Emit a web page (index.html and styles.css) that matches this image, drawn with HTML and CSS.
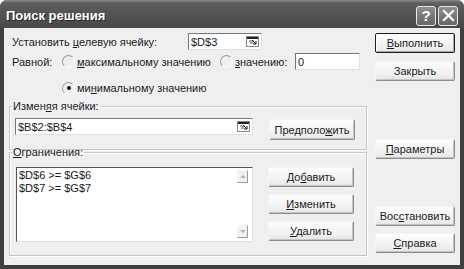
FILE: index.html
```html
<!DOCTYPE html>
<html lang="ru">
<head>
    <meta charset="UTF-8">
    <title>Поиск решения</title>
    <link rel="stylesheet" href="styles.css">
</head>
<body>
    <div class="window">
        <div class="titlebar">
            <span class="title">Поиск решения</span>
            <div class="title-btns">
                <span class="tbtn">?</span>
                <span class="tbtn">
                    <svg width="13" height="13" viewBox="0 0 13 13"><path d="M2 2 L11 11 M11 2 L2 11" stroke="#fff" stroke-width="2.2" stroke-linecap="square"/></svg>
                </span>
            </div>
        </div>
        <div class="dialog">
            <div class="main">
                <div class="row">
                    <span class="lbl-target">Установить <u>ц</u>елевую ячейку:</span>
                    <div class="field target">
                        <span>$D$3</span>
                        <svg class="ref-icon" width="13" height="11" viewBox="0 0 13 11">
                            <rect x="0.5" y="0.5" width="12" height="10" fill="#fff" stroke="#888"/>
                            <rect x="1" y="1" width="11" height="2" fill="#222"/>
                            <path d="M3 5 L8 5 M4 7 L7 7" stroke="#555"/>
                            <path d="M6 4 L10 8 M10 5 L10 8 L7 8" stroke="#111" fill="none"/>
                        </svg>
                    </div>
                </div>
                <div class="row row-equal">
                    <span class="lbl-equal">Равной:</span>
                    <span class="radio"></span>
                    <span class="opt-max"><u>м</u>аксимальному значению</span>
                    <span class="radio"></span>
                    <span class="opt-val"><u>з</u>начению:</span>
                    <div class="field value">0</div>
                </div>
                <div class="row row-min">
                    <span class="radio checked"></span>
                    <span>ми<u>н</u>имальному значению</span>
                </div>
                <fieldset class="group group-cells">
                    <legend>Измен<u>я</u>я ячейки:</legend>
                    <div class="group-body">
                        <div class="field cells">
                            <span>$B$2:$B$4</span>
                            <svg class="ref-icon" width="13" height="11" viewBox="0 0 13 11">
                                <rect x="0.5" y="0.5" width="12" height="10" fill="#fff" stroke="#888"/>
                                <rect x="1" y="1" width="11" height="2" fill="#222"/>
                                <path d="M3 5 L8 5 M4 7 L7 7" stroke="#555"/>
                                <path d="M6 4 L10 8 M10 5 L10 8 L7 8" stroke="#111" fill="none"/>
                            </svg>
                        </div>
                        <button class="btn">Предполо<u>ж</u>ить</button>
                    </div>
                </fieldset>
                <fieldset class="group group-limits">
                    <legend><u>О</u>граничения:</legend>
                    <div class="group-body">
                        <div class="list">
                            <div class="list-items">
                                <div>$D$6 &gt;= $G$6</div>
                                <div>$D$7 &gt;= $G$7</div>
                            </div>
                            <div class="scroll">
                                <span class="arrow up"></span>
                                <span class="arrow down"></span>
                            </div>
                        </div>
                        <div class="list-btns">
                            <button class="btn">До<u>б</u>авить</button>
                            <button class="btn"><u>И</u>зменить</button>
                            <button class="btn"><u>У</u>далить</button>
                        </div>
                    </div>
                </fieldset>
            </div>
            <div class="side">
                <button class="btn default"><u>В</u>ыполнить</button>
                <button class="btn btn-close">Закрыть</button>
                <button class="btn btn-params"><u>П</u>араметры</button>
                <button class="btn btn-reset">Вос<u>с</u>тановить</button>
                <button class="btn btn-help"><u>С</u>правка</button>
            </div>
        </div>
    </div>
</body>
</html>
```

FILE: styles.css
```css
body {
    margin: 0;
    padding: 0;
    background-color: #fff;
    font-family: "Liberation Sans", Arial, sans-serif;
    font-size: 11px;
    color: #1a1a1a;
}
u {
    text-decoration: underline;
    text-underline-offset: 1px;
}
.window {
    width: 464px;
    height: 269px;
    background-color: #3e3e3e;
    border-radius: 7px 7px 0 0;
    overflow: hidden;
    display: flex;
    flex-direction: column;
}
.titlebar {
    height: 28px;
    box-sizing: border-box;
    flex: none;
    display: flex;
    align-items: center;
    justify-content: space-between;
    padding: 3px 6px 0 6px;
    background: linear-gradient(#8a8a8a 0px, #5e5e5e 3px, #535353 14px, #484848 28px);
}
.title {
    color: #fff;
    font-weight: bold;
    font-size: 13px;
    text-shadow: 1px 1px 0 #2a2a2a;
}
.title-btns {
    display: flex;
    gap: 2px;
}
.tbtn {
    width: 18px;
    height: 18px;
    border: 1px solid #e8e8e8;
    border-radius: 3px;
    background: linear-gradient(#8d8d8d, #666);
    color: #fff;
    font-weight: bold;
    font-size: 15px;
    display: flex;
    align-items: center;
    justify-content: center;
}
.dialog {
    flex: 1;
    margin: 0 4px 4px 4px;
    background-color: #efefef;
    display: flex;
    gap: 8px;
    padding-top: 5px;
}
.main {
    width: 363px;
    padding-left: 5px;
    box-sizing: border-box;
}
.row {
    display: flex;
    align-items: center;
    height: 17px;
    padding-left: 3px;
}
.lbl-target {
    width: 176px;
}
.field {
    height: 17px;
    box-sizing: border-box;
    background-color: #fff;
    border: 1px solid;
    border-color: #777 #e0e0e0 #e0e0e0 #777;
    padding: 0 2px;
    display: flex;
    align-items: center;
    justify-content: space-between;
}
.target {
    width: 74px;
}
.ref-icon {
    flex: none;
}
.row-equal {
    margin-top: 3px;
}
.lbl-equal {
    width: 50px;
}
.radio {
    width: 13px;
    height: 13px;
    box-sizing: border-box;
    border-radius: 50%;
    border: 1px solid;
    border-color: #9a9a9a #fafafa #fafafa #9a9a9a;
    background-color: #efefef;
    margin-right: 2px;
    display: flex;
    align-items: center;
    justify-content: center;
}
.radio.checked::after {
    content: "";
    width: 4px;
    height: 4px;
    border-radius: 50%;
    background-color: #111;
}
.opt-max {
    width: 143px;
}
.opt-val {
    width: 60px;
}
.value {
    width: 65px;
}
.row-min {
    margin-top: 11px;
    height: 14px;
    padding-left: 53px;
}
.group {
    margin: 5px 0 0 0;
    padding: 0;
    width: 358px;
    box-sizing: border-box;
    border: 1px solid #c6c6c6;
    box-shadow: inset 1px 1px 0 #fff, 1px 1px 0 #fff;
}
.group legend {
    padding: 0 1px;
    margin-left: 2px;
    line-height: 13px;
}
.group-body {
    display: flex;
    gap: 16px;
    padding-left: 5px;
}
.group-cells .group-body {
    padding-top: 5px;
    height: 31px;
    align-items: flex-start;
}
.cells {
    width: 238px;
}
.btn {
    width: 80px;
    height: 20px;
    padding: 0;
    font-family: "Liberation Sans", Arial, sans-serif;
    font-size: 11px;
    color: #1a1a1a;
    background: linear-gradient(#fdfdfd, #f2f2f2 60%, #e6e6e6);
    border: 1px solid;
    border-color: #f4f4f4 #8c8c8c #8c8c8c #f4f4f4;
    box-shadow: inset -1px -1px 0 #c4c4c4;
    border-radius: 2px;
}
.group-cells .btn {
    width: 86px;
    height: 21px;
    margin-top: 1px;
}
.group-limits {
    margin-top: -4px;
}
.group-limits .group-body {
    padding-top: 8px;
    padding-left: 6px;
    height: 88px;
    gap: 15px;
}
.list {
    width: 237px;
    height: 75px;
    box-sizing: border-box;
    background-color: #fff;
    border: 1px solid;
    border-color: #555 #e0e0e0 #e0e0e0 #555;
    display: flex;
    justify-content: space-between;
}
.list-items {
    padding: 1px 0 0 2px;
    line-height: 13px;
}
.scroll {
    width: 13px;
    display: flex;
    flex-direction: column;
    justify-content: space-between;
    padding: 2px 2px 3px 0;
}
.arrow {
    width: 11px;
    height: 13px;
    box-sizing: border-box;
    border: 1px solid;
    border-color: #f4f4f4 #9a9a9a #9a9a9a #f4f4f4;
    background-color: #f2f2f2;
    display: flex;
    align-items: center;
    justify-content: center;
}
.arrow::after {
    content: "";
    border-left: 3px solid transparent;
    border-right: 3px solid transparent;
}
.arrow.up::after {
    border-bottom: 3px solid #b4b4b4;
}
.arrow.down::after {
    border-top: 3px solid #b4b4b4;
}
.list-btns {
    display: flex;
    flex-direction: column;
    gap: 7px;
}
.list-btns .btn {
    width: 86px;
}
.side {
    width: 80px;
    display: flex;
    flex-direction: column;
}
.default {
    border: 1px solid #1e1e1e;
    box-shadow: inset 1px 1px 0 #fff, inset -1px -1px 0 #aaa;
}
.btn-close {
    margin-top: 8px;
}
.btn-params {
    margin-top: 58px;
}
.btn-reset {
    margin-top: 47px;
}
.btn-help {
    margin-top: 7px;
}
```
